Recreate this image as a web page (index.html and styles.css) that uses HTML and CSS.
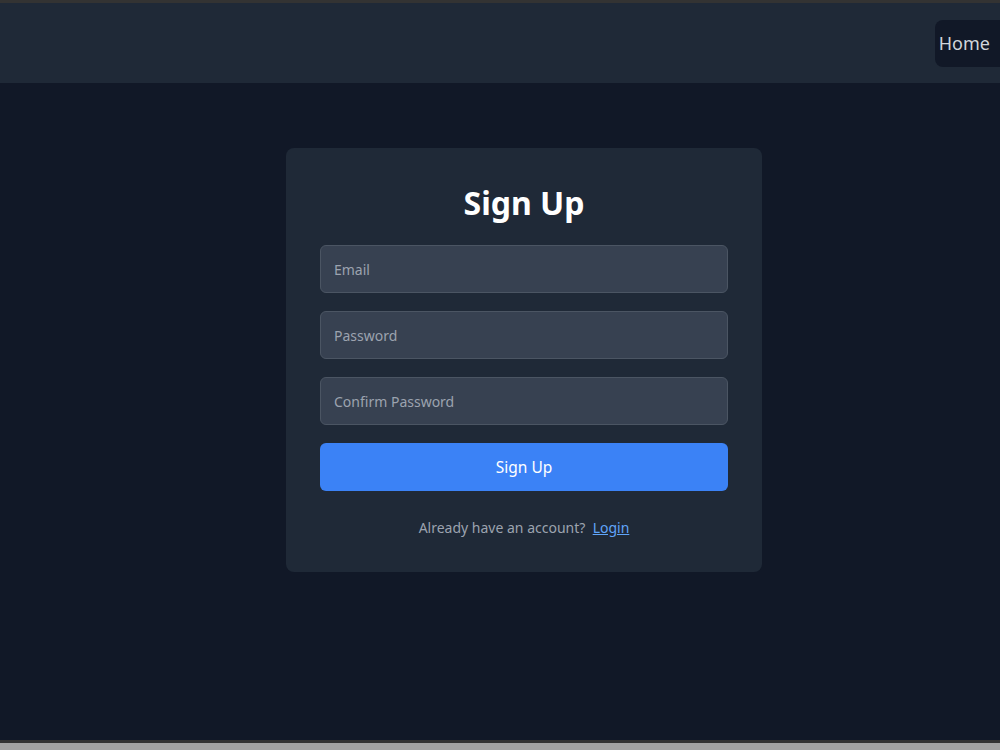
FILE: index.html
```html
<!DOCTYPE html>
<html lang="en">
<head>
  <meta charset="UTF-8">
  <meta name="viewport" content="width=device-width, initial-scale=1.0">
  <title>Sign Up</title>
  <link rel="stylesheet" href="styles.css">
</head>
<body>
  <div class="app">
    <header class="navbar">
      <a class="home-btn" href="#">Home</a>
    </header>

    <main class="main">
      <div class="card">
        <h1>Sign Up</h1>
        <form class="signup-form">
          <input type="email" placeholder="Email">
          <input type="password" placeholder="Password">
          <input type="password" placeholder="Confirm Password">
          <button type="submit" class="submit-btn">Sign Up</button>
        </form>
        <p class="switch">Already have an account?&nbsp; <a href="#">Login</a></p>
      </div>
    </main>
  </div>
  <div class="bottom-bar"></div>
</body>
</html>
```

FILE: styles.css
```css
html, body {
  margin: 0;
  padding: 0;
  height: 100%;
  overflow: hidden;
}
body {
  font-family: "Noto Sans", "Open Sans", Arial, sans-serif;
  background-color: #a3a3a3;
  display: flex;
  flex-direction: column;
}
.app {
  height: 743px;
  flex-shrink: 0;
  background-color: #111827;
  border-top: 3px solid #333333;
  border-bottom: 3px solid #333333;
  box-sizing: border-box;
  display: flex;
  flex-direction: column;
}
.navbar {
  height: 80px;
  background-color: #1f2937;
  display: flex;
  align-items: center;
  justify-content: flex-end;
}
.home-btn {
  display: flex;
  align-items: center;
  height: 47px;
  margin-right: -40px;
  padding: 0 50px 0 4px;
  background-color: #111827;
  border-radius: 8px;
  color: #d1d5db;
  font-size: 18px;
  text-decoration: none;
}
.main {
  flex: 1;
  display: flex;
  justify-content: center;
  align-items: flex-start;
  padding: 65px 0 0 48px;
}
.card {
  width: 476px;
  box-sizing: border-box;
  background-color: #1f2937;
  border-radius: 8px;
  padding: 32px 34px 31px;
}
.card h1 {
  margin: 0 0 19px;
  text-align: center;
  color: #ffffff;
  font-size: 32px;
  font-weight: 700;
  line-height: 46px;
}
.signup-form {
  display: flex;
  flex-direction: column;
  gap: 18px;
}
.signup-form input {
  height: 48px;
  box-sizing: border-box;
  background-color: #374151;
  border: 1px solid #4b5563;
  border-radius: 6px;
  padding: 0 13px;
  color: #e5e7eb;
  font-family: inherit;
  font-size: 14px;
}
.signup-form input::placeholder {
  color: #9ca3af;
}
.submit-btn {
  height: 48px;
  background-color: #3b82f6;
  border: none;
  border-radius: 6px;
  color: #ffffff;
  font-family: inherit;
  font-size: 15.5px;
  cursor: pointer;
}
.switch {
  margin: 24px 0 0;
  text-align: center;
  color: #9ca3af;
  font-size: 14px;
  line-height: 26px;
}
.switch a {
  color: #60a5fa;
}
.bottom-bar {
  flex: 1;
  background-color: #a3a3a3;
}
```
